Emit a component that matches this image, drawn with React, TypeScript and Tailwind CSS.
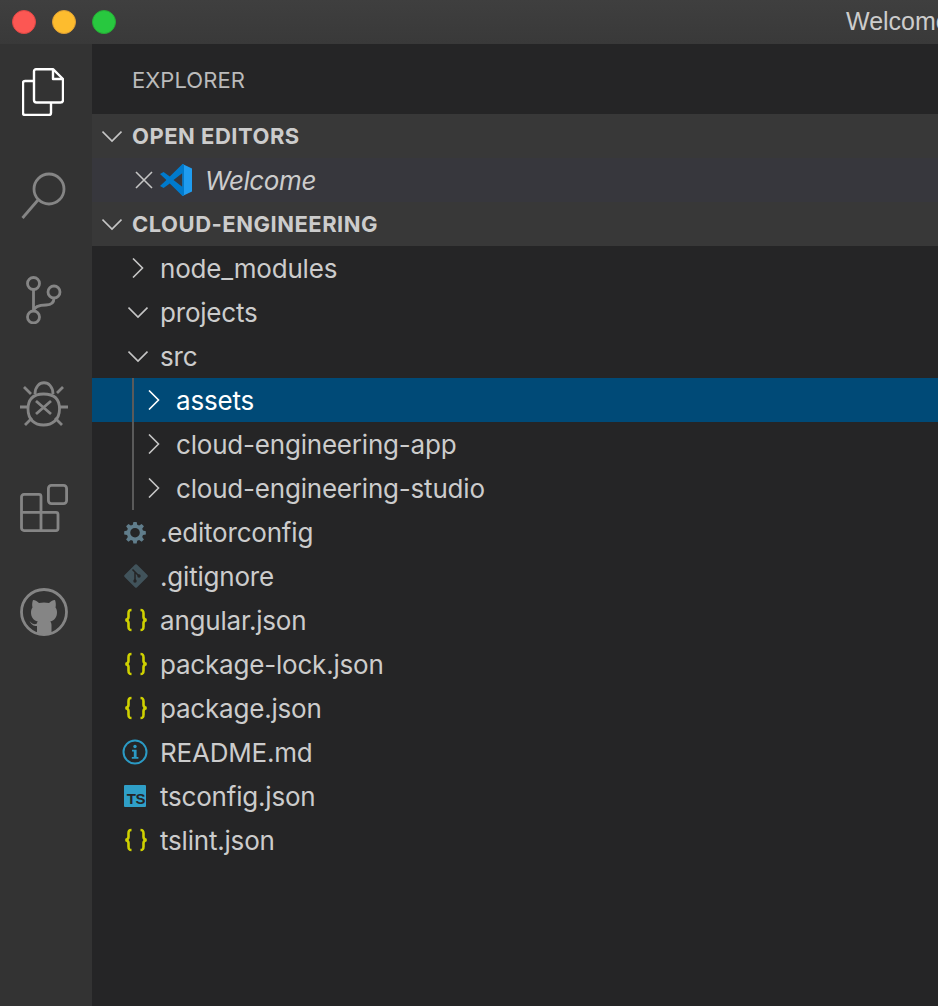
import React from "react";

const font = { fontFamily: "Inter, 'Noto Sans', sans-serif" };

function Chevron({ open, white }: { open?: boolean; white?: boolean }) {
  return (
    <svg width="20" height="20" viewBox="0 0 20 20" fill="none" stroke={white ? "#ffffff" : "#c5c5c5"} strokeWidth="1.6" className="shrink-0">
      {open ? <path d="M0.5 5.5 L10 15 L19.5 5.5" /> : <path d="M5 0.5 L14.5 10 L5 19.5" />}
    </svg>
  );
}

function Braces() {
  return (
    <svg width="24" height="24" viewBox="0 0 24 24" fill="none" stroke="#cfd100" strokeWidth="2.6">
      <path d="M7.5 2 C5 2 4.5 3 4.5 5.5 L4.5 9 C4.5 10.5 3.8 11.5 1.5 12 C3.8 12.5 4.5 13.5 4.5 15 L4.5 18.5 C4.5 21 5 22 7.5 22" />
      <path d="M16.5 2 C19 2 19.5 3 19.5 5.5 L19.5 9 C19.5 10.5 20.2 11.5 22.5 12 C20.2 12.5 19.5 13.5 19.5 15 L19.5 18.5 C19.5 21 19 22 16.5 22" />
    </svg>
  );
}

function Gear() {
  return (
    <svg width="23" height="23" viewBox="0 0 24 24" fill="#607d8b" className="mr-[1px]">
      <path fillRule="evenodd" d="M9.8 1h3.4l.6 3 2 .8 2.6-1.8 2.4 2.4-1.8 2.6.8 2 3 .6v3.4l-3 .6-.8 2 1.8 2.6-2.4 2.4-2.6-1.8-2 .8-.6 3H9.8l-.6-3-2-.8-2.6 1.8-2.4-2.4L4 16.6l-.8-2-3-.6v-3.4l3-.6.8-2L2.2 5.4l2.4-2.4 2.6 1.8 2-.8.6-3zm1.7 6.2a5 5 0 1 0 0 10 5 5 0 0 0 0-10z" />
    </svg>
  );
}

function GitIcon() {
  return (
    <svg width="24" height="24" viewBox="0 0 24 24">
      <path d="M12 1.5 L22.5 12 L12 22.5 L1.5 12 Z" fill="#41535b" stroke="#41535b" strokeLinejoin="round" strokeWidth="2.5" />
      <path d="M8.5 5.5 L15 12 M11 8 V17" stroke="#252526" strokeWidth="1.5" fill="none" />
      <circle cx="11" cy="17" r="1.7" fill="#252526" />
      <circle cx="15" cy="12" r="1.7" fill="#252526" />
    </svg>
  );
}

function InfoIcon() {
  return (
    <svg width="26" height="26" viewBox="0 0 26 26" fill="none">
      <circle cx="13" cy="13" r="11.5" stroke="#2b9ac4" strokeWidth="2" />
      <circle cx="13" cy="7.5" r="1.7" fill="#2b9ac4" />
      <path d="M10 10.8 H14.6 V18 H16.4 V19.8 H9.8 V18 H11.8 V12.6 H10 Z" fill="#2b9ac4" />
    </svg>
  );
}

function TsIcon() {
  return (
    <span className="w-[22px] h-[22px] mr-[2px] bg-[#2f9fc7] rounded-[1px] flex items-end justify-end pr-[1px] text-[15px] font-bold leading-[16px] tracking-[-0.5px] text-[#252526]" style={{ fontFamily: "'Liberation Sans', sans-serif" }}>
      TS
    </span>
  );
}

function VsCodeLogo() {
  return (
    <svg width="32" height="32" viewBox="0 0 32 32">
      <path d="M22.5 0 L32 4.5 V27.5 L22.5 32 L22.5 8.5 Z" fill="#1f9cf0" />
      <path d="M22.5 0 L9.8 12.6 L3.6 8 L0 10 L6.4 16 L0 22 L3.6 24 L9.8 19.4 L22.5 32 L24 31.3 V0.7 Z M22.5 9 V23 L13.5 16 Z" fill="#007acc" fillRule="evenodd" />
    </svg>
  );
}

function Row({ label, icon, indent = 0, selected }: { label: string; icon: React.ReactNode; indent?: number; selected?: boolean }) {
  return (
    <div className={`h-[44px] flex items-center relative ${selected ? "bg-[#004a77] text-white" : "text-[#cccccc]"}`}>
      <div className="shrink-0 flex items-center justify-end pr-[12px]" style={{ width: 68 + indent }}>
        {icon}
      </div>
      <span className="text-[26px] tracking-[-0.2px]">{label}</span>
    </div>
  );
}

function Activity({ children }: { children: React.ReactNode }) {
  return <div className="h-[96px] flex justify-center items-center">{children}</div>;
}

function SectionHeader({ label }: { label: string }) {
  return (
    <div className="h-[44px] bg-[#383838] flex items-center text-[#cccccc]">
      <div className="w-[40px] pl-[10px] flex"><Chevron open /></div>
      <span className="text-[22px] font-bold tracking-[0.5px]">{label}</span>
    </div>
  );
}

export default function App() {
  const ic = "#858585";
  return (
    <div className="w-[938px] h-[1006px] overflow-hidden flex flex-col bg-[#252526]" style={font}>
      <div className="h-[44px] shrink-0 bg-gradient-to-b from-[#3f3f3f] to-[#393939] flex items-center relative">
        <div className="flex gap-[16px] pl-[12px]">
          <div className="w-[24px] h-[24px] rounded-full bg-[#fc5753] border border-[#df4744]" />
          <div className="w-[24px] h-[24px] rounded-full bg-[#fdbc2e] border border-[#de9f34]" />
          <div className="w-[24px] h-[24px] rounded-full bg-[#28c83f] border border-[#27aa35]" />
        </div>
        <span className="absolute left-[846px] top-[5px] text-[25px] leading-[32px] whitespace-nowrap text-[#cccccc]" style={{ fontFamily: "'Liberation Sans', sans-serif" }}>
          Welcome
        </span>
      </div>
      <div className="flex flex-1 min-h-0">
        <div className="w-[92px] shrink-0 bg-[#333333] flex flex-col gap-[8px] pr-[4px]">
          <Activity>
            <svg width="42" height="48" viewBox="0 0 42 48" fill="none" stroke="#ffffff" strokeWidth="2.4" strokeLinejoin="round" className="ml-[-2px]">
              <path d="M12 13 H3 a2 2 0 0 0 -2 2 V45 a2 2 0 0 0 2 2 H27 a2 2 0 0 0 2 -2 V35" />
              <path d="M14 1.2 H31 L41 11 V32 a2.5 2.5 0 0 1 -2.5 2.5 H14.5 a2.5 2.5 0 0 1 -2.5 -2.5 V3.2 a2 2 0 0 1 2 -2 Z" />
              <path d="M31 1.2 V11 H41" />
            </svg>
          </Activity>
          <Activity>
            <svg width="46" height="48" viewBox="0 0 46 48" fill="none" stroke={ic} strokeWidth="2.8">
              <circle cx="28" cy="17" r="15" />
              <path d="M17 28 L1.5 46" />
            </svg>
          </Activity>
          <Activity>
            <svg width="36" height="48" viewBox="0 0 36 48" fill="none" stroke={ic} strokeWidth="2.8">
              <circle cx="7.5" cy="7.5" r="6" />
              <circle cx="7.5" cy="41" r="6" />
              <circle cx="28" cy="16" r="6" />
              <path d="M7.5 13.5 V35 M28 22 C28 27 25 29 20 29 C14 29 8.5 30 7.5 35" />
            </svg>
          </Activity>
          <Activity>
            <svg width="48" height="48" viewBox="0 0 48 48" fill="none" stroke={ic} strokeWidth="2.8">
              <path d="M15 14 C15 -1 33 -1 33 14" />
              <path d="M23.5 14 C12 14 8 20 8 29 C8 40 15 45 23.5 45 C32 45 39.5 40 39.5 29 C39.5 20 35 14 23.5 14 Z" />
              <path d="M16 21 L31 34 M31 21 L16 34" />
              <path d="M4 7 L11 14 M43 7 L37 13 M0 27 H8 M39 27 H48 M5 45 L12 38 M42 45 L35 38" />
            </svg>
          </Activity>
          <Activity>
            <svg width="48" height="48" viewBox="0 0 48 48" fill="none" stroke={ic} strokeWidth="2.8" strokeLinejoin="round">
              <rect x="28.4" y="1.4" width="18.2" height="18.2" rx="3" />
              <path d="M4 10.4 H19 a2 2 0 0 1 2 2 V28.4 H36 a2 2 0 0 1 2 2 V44.6 a2 2 0 0 1 -2 2 H4 a2.5 2.5 0 0 1 -2.5 -2.5 V13 a2.5 2.5 0 0 1 2.5 -2.6 Z" />
              <path d="M1.5 28.4 H21 V46.6" />
            </svg>
          </Activity>
          <Activity>
            <svg width="48" height="48" viewBox="0 0 48 48" fill="none">
              <circle cx="24" cy="24" r="22.5" stroke={ic} strokeWidth="2.8" />
              <path d="M17 45 V38 C15 38 12 38 9.5 33 C12 36 14 36.5 16.5 36 C16.7 35 17 34.2 17.8 33.4 C13 32.4 11 28.5 11 24.5 C11 22.5 11.5 21 12.5 19.6 C12 17.5 12 14.5 13 12 C15.5 12 17.5 13.5 19 15 C22 14.3 26 14.3 29 15 C30.5 13.5 32.5 12 35 12 C36 14.5 36 17.5 35.5 19.6 C36.5 21 37 22.5 37 24.5 C37 28.5 35 32.4 30.2 33.4 C31.2 34.4 31.5 35.7 31.5 37 V45 C27 46.5 21 46.5 17 45 Z" fill={ic} />
            </svg>
          </Activity>
        </div>
        <div className="flex-1 min-w-0 bg-[#252526] flex flex-col">
          <div className="h-[70px] flex items-center pl-[40px] pt-[2px] text-[22px] text-[#bbbbbb] tracking-[0.05px]">EXPLORER</div>
          <SectionHeader label="OPEN EDITORS" />
          <div className="h-[44px] bg-[#37373d] flex items-center text-[#cccccc]">
            <svg width="18" height="18" viewBox="0 0 18 18" stroke="#c5c5c5" strokeWidth="1.6" className="ml-[43px]"><path d="M1 1 L17 17 M17 1 L1 17" /></svg>
            <div className="ml-[7px]"><VsCodeLogo /></div>
            <span className="ml-[13px] text-[26px] italic tracking-[-0.4px]">Welcome</span>
          </div>
          <SectionHeader label="CLOUD-ENGINEERING" />
          <Row label="node_modules" icon={<Chevron />} />
          <Row label="projects" icon={<Chevron open />} />
          <Row label="src" icon={<Chevron open />} />
          <div className="relative">
            <Row label="assets" icon={<Chevron white />} indent={16} selected />
            <Row label="cloud-engineering-app" icon={<Chevron />} indent={16} />
            <Row label="cloud-engineering-studio" icon={<Chevron />} indent={16} />
            <div className="absolute left-[40px] top-0 bottom-0 w-[2px] bg-[#5a5a5a]" />
          </div>
          <Row label=".editorconfig" icon={<Gear />} />
          <Row label=".gitignore" icon={<GitIcon />} />
          <Row label="angular.json" icon={<Braces />} />
          <Row label="package-lock.json" icon={<Braces />} />
          <Row label="package.json" icon={<Braces />} />
          <Row label="README.md" icon={<InfoIcon />} />
          <Row label="tsconfig.json" icon={<TsIcon />} />
          <Row label="tslint.json" icon={<Braces />} />
        </div>
      </div>
    </div>
  );
}
